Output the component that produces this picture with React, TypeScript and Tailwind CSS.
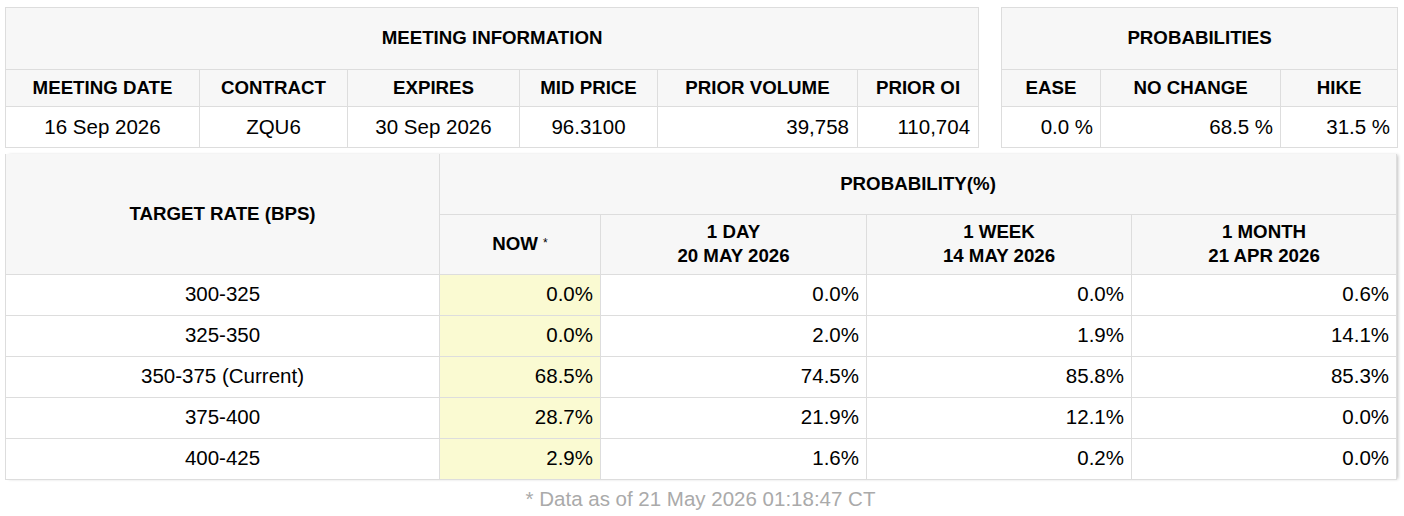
import React from "react";

const F = { fontFamily: '"Liberation Sans", Arial, sans-serif' };

const th = "border border-[#dddddd] bg-[#f7f7f7] font-bold text-[18.7px] text-black text-center p-0";
const td = "border border-[#dddddd] bg-white text-[20.5px] text-black p-0";

const rows = [
  ["300-325", "0.0%", "0.0%", "0.0%", "0.6%"],
  ["325-350", "0.0%", "2.0%", "1.9%", "14.1%"],
  ["350-375 (Current)", "68.5%", "74.5%", "85.8%", "85.3%"],
  ["375-400", "28.7%", "21.9%", "12.1%", "0.0%"],
  ["400-425", "2.9%", "1.6%", "0.2%", "0.0%"],
];

export default function App() {
  return (
    <div style={F} className="w-[1404px] h-[516px] bg-white pl-[5px] pt-[7px]">
      <div className="flex gap-[22px]">
        <table className="border-collapse table-fixed w-[973px]">
          <colgroup>
            <col className="w-[194px]" />
            <col className="w-[148px]" />
            <col className="w-[172px]" />
            <col className="w-[138px]" />
            <col className="w-[200px]" />
            <col className="w-[121px]" />
          </colgroup>
          <thead>
            <tr className="h-[62px]">
              <th colSpan={6} className={th}>MEETING INFORMATION</th>
            </tr>
            <tr className="h-[37px]">
              <th className={th}>MEETING DATE</th>
              <th className={th}>CONTRACT</th>
              <th className={th}>EXPIRES</th>
              <th className={th}>MID PRICE</th>
              <th className={th}>PRIOR VOLUME</th>
              <th className={th}>PRIOR OI</th>
            </tr>
          </thead>
          <tbody>
            <tr className="h-[41px]">
              <td className={`${td} text-center`}>16 Sep 2026</td>
              <td className={`${td} text-center`}>ZQU6</td>
              <td className={`${td} text-center`}>30 Sep 2026</td>
              <td className={`${td} text-center`}>96.3100</td>
              <td className={`${td} text-right pr-[8px]`}>39,758</td>
              <td className={`${td} text-right pr-[8px]`}>110,704</td>
            </tr>
          </tbody>
        </table>
        <table className="border-collapse table-fixed w-[396px]">
          <colgroup>
            <col className="w-[99px]" />
            <col className="w-[180px]" />
            <col className="w-[117px]" />
          </colgroup>
          <thead>
            <tr className="h-[62px]">
              <th colSpan={3} className={th}>PROBABILITIES</th>
            </tr>
            <tr className="h-[37px]">
              <th className={th}>EASE</th>
              <th className={th}>NO CHANGE</th>
              <th className={th}>HIKE</th>
            </tr>
          </thead>
          <tbody>
            <tr className="h-[41px]">
              <td className={`${td} text-right pr-[7px]`}>0.0 %</td>
              <td className={`${td} text-right pr-[7px]`}>68.5 %</td>
              <td className={`${td} text-right pr-[7px]`}>31.5 %</td>
            </tr>
          </tbody>
        </table>
      </div>

      <div className="mt-[6px] w-[1391px] shadow-[3px_0_3px_-1px_rgba(0,0,0,0.25)]">
        <table className="border-collapse table-fixed w-[1391px]">
          <colgroup>
            <col className="w-[434px]" />
            <col className="w-[161px]" />
            <col className="w-[266px]" />
            <col className="w-[265px]" />
            <col className="w-[265px]" />
          </colgroup>
          <thead>
            <tr className="h-[60px]">
              <th rowSpan={2} className={`${th} border-t-0`}>TARGET RATE (BPS)</th>
              <th colSpan={4} className={`${th} border-t-0`}>PROBABILITY(%)</th>
            </tr>
            <tr className="h-[60px]">
              <th className={th}>
                NOW <sup className="text-[12px] font-normal relative -top-[3px]">*</sup>
              </th>
              <th className={`${th} leading-[24px]`}>1 DAY<br />20 MAY 2026</th>
              <th className={`${th} leading-[24px]`}>1 WEEK<br />14 MAY 2026</th>
              <th className={`${th} leading-[24px]`}>1 MONTH<br />21 APR 2026</th>
            </tr>
          </thead>
          <tbody>
            {rows.map((r) => (
              <tr key={r[0]} className="h-[41px]">
                <td className={`${td} text-center`}>{r[0]}</td>
                <td className={`${td} !bg-[#fafad2] text-right pr-[7px]`}>{r[1]}</td>
                <td className={`${td} text-right pr-[7px]`}>{r[2]}</td>
                <td className={`${td} text-right pr-[7px]`}>{r[3]}</td>
                <td className={`${td} text-right pr-[7px]`}>{r[4]}</td>
              </tr>
            ))}
          </tbody>
        </table>
      </div>
      <div className="w-[1391px] text-center text-[20.5px] text-[#aaaaaa] mt-[4px]">
        * Data as of 21 May 2026 01:18:47 CT
      </div>
    </div>
  );
}
